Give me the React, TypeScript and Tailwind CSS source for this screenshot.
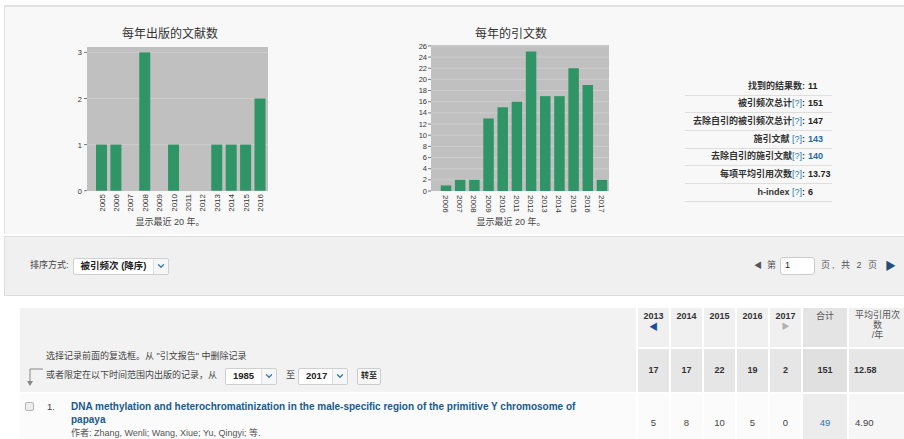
import { ChevronDown } from "lucide-react";

const FONT = "font-['Liberation_Sans','Noto_Sans_CJK_SC',sans-serif]";

const pubYears = [2005, 2006, 2007, 2008, 2009, 2010, 2011, 2012, 2013, 2014, 2015, 2016];
const pubCounts = [1, 1, 0, 3, 0, 1, 0, 0, 1, 1, 1, 2];

const citeYears = [2006, 2007, 2008, 2009, 2010, 2011, 2012, 2013, 2014, 2015, 2016, 2017];
const citeCounts = [1, 2, 2, 13, 15, 16, 25, 17, 17, 22, 19, 2];

const BAR = "#2f9566";
const PLOT = "#c0c0c0";
const GRID = "#cdcdcd";

function PubChart() {
  const zero = 149.7;
  const unit = 46.1;
  return (
    <svg width="200" height="175" className="block">
      <rect x="17" y="6" width="181" height="144" fill={PLOT} />
      {[1, 2, 3].map((v) => (
        <line key={v} x1="17" x2="198" y1={zero - v * unit} y2={zero - v * unit} stroke={GRID} strokeWidth="1" />
      ))}
      {[0, 1, 2, 3].map((v) => (
        <g key={v}>
          <line x1="14" x2="17" y1={zero - v * unit} y2={zero - v * unit} stroke="#777" />
          <text x="12" y={zero - v * unit + 3} textAnchor="end" fontSize="7.5" fill="#333">
            {v}
          </text>
        </g>
      ))}
      {pubYears.map((y, i) => {
        const cx = 31.5 + i * 14.41;
        const v = pubCounts[i];
        return (
          <g key={y}>
            {v > 0 && <rect x={cx - 5.5} y={zero - v * unit} width="11" height={v * unit} fill={BAR} />}
            <text
              transform={`translate(${cx + 3} 153) rotate(-90)`}
              textAnchor="end"
              fontSize="8"
              fill="#333"
            >
              {y}
            </text>
          </g>
        );
      })}
    </svg>
  );
}

function CiteChart() {
  const zero = 150;
  const unit = 5.58;
  const ticks = Array.from({ length: 14 }, (_, i) => i * 2);
  return (
    <svg width="202" height="175" className="block">
      <rect x="21" y="4" width="178" height="146" fill={PLOT} />
      {ticks.slice(1).map((v) => (
        <line key={v} x1="21" x2="199" y1={zero - v * unit} y2={zero - v * unit} stroke={GRID} strokeWidth="1" />
      ))}
      {ticks.map((v) => (
        <g key={v}>
          <line x1="18" x2="21" y1={zero - v * unit} y2={zero - v * unit} stroke="#777" />
          <text x="17" y={zero - v * unit + 2.6} textAnchor="end" fontSize="7.5" fill="#333">
            {v}
          </text>
        </g>
      ))}
      {citeYears.map((y, i) => {
        const cx = 36 + i * 14.18;
        const v = citeCounts[i];
        return (
          <g key={y}>
            <rect x={cx - 5.25} y={zero - v * unit} width="10.5" height={v * unit} fill={BAR} />
            <text transform={`translate(${cx - 3} 154) rotate(90)`} fontSize="8" fill="#333">
              {y}
            </text>
          </g>
        );
      })}
    </svg>
  );
}

const stats = [
  { label: "找到的结果数", q: false, value: "11" },
  { label: "被引频次总计", q: true, value: "151" },
  { label: "去除自引的被引频次总计", q: true, value: "147" },
  { label: "施引文献 ", q: true, value: "143", link: true },
  { label: "去除自引的施引文献", q: true, value: "140", link: true },
  { label: "每项平均引用次数", q: true, value: "13.73" },
  { label: "h-index ", q: true, value: "6" },
];

function Stats() {
  return (
    <div className="ml-[73px] mt-[71px] w-[147px]">
      {stats.map((s) => (
        <div key={s.label} className="flex h-[17.7px] items-center border-b border-[#dedede] text-[9px] font-bold">
          <div className="w-[123px] pr-[3px] text-right text-[#333]">
            {s.label}
            {s.q && <span className="font-normal text-[#2a76b0]">[?]</span>}
            <span>:</span>
          </div>
          <div className={s.link ? "text-[#1d6aa5]" : "text-[#222]"}>{s.value}</div>
        </div>
      ))}
    </div>
  );
}

function Select({ value, width }: { value: string; width: string }) {
  return (
    <div className={`flex h-[17px] items-stretch rounded-[2px] border border-[#cfcfcf] bg-white ${width}`}>
      <div className="flex flex-1 items-center pl-[7px] text-[9.5px] font-bold text-[#222]">{value}</div>
      <div className="flex w-[15px] items-center justify-center border-l border-[#dedede] bg-[#f4f6f8]">
        <ChevronDown size={10} strokeWidth={3} className="text-[#3576ad]" />
      </div>
    </div>
  );
}

const years = ["2013", "2014", "2015", "2016", "2017"];
const totals = ["17", "17", "22", "19", "2"];
const rowVals = ["5", "8", "10", "5", "0"];

export default function App() {
  return (
    <div className={`h-[439px] w-[904px] overflow-hidden bg-white ${FONT}`}>
      {/* charts */}
      <div className="ml-[4px] mt-[5px] flex h-[229px] border-l border-t-2 border-[#e2e2e2] bg-[#f8f8f8]">
        <div className="ml-[65px] w-[200px] pt-[20px]">
          <div className="text-center text-[12px] leading-[14px] text-[#333]">每年出版的文献数</div>
          <PubChart />
          <div className="text-center text-[9px] leading-[12px] text-[#444]">显示最近 20 年。</div>
        </div>
        <div className="ml-[140px] w-[202px] pt-[20px]">
          <div className="text-center text-[12px] leading-[14px] text-[#333]">每年的引文数</div>
          <CiteChart />
          <div className="text-center text-[9px] leading-[12px] text-[#444]">显示最近 20 年。</div>
        </div>
        <Stats />
      </div>

      {/* sort + paging */}
      <div className="ml-[4px] mt-[2px] flex h-[60px] items-center justify-between border-y border-l border-[#dddddd] bg-[#f0f0f0] pl-[25px] pr-[8px]">
        <div className="flex items-center gap-[4px] text-[9px] text-[#444]">
          <span>排序方式:</span>
          <Select value="被引频次 (降序)" width="w-[96px]" />
        </div>
        <div className="flex items-center text-[9px] text-[#555]">
          <span className="text-[8px] text-[#555]">◀</span>
          <span className="ml-[5px]">第</span>
          <div className="ml-[4px] flex h-[18px] w-[35px] items-center rounded-[3px] border border-[#cccccc] bg-white pl-[4px] text-[#222]">
            1
          </div>
          <span className="ml-[6px] tracking-[2px]">页, 共 2 页</span>
          <span className="ml-[6px] text-[11px] text-[#1f4f7d]">▶</span>
        </div>
      </div>

      {/* citation table */}
      <div className="pl-[20px] pt-[12px]">
        <div className="grid grid-cols-[616px_31px_31px_31px_31px_31px_44px_57px] grid-rows-[39px_43px_auto] gap-[2px] text-[9px]">
          <div className="row-span-2 flex flex-col justify-end bg-[#f2f2f2] pb-[5px] pl-[4px] text-[#444]">
            <div className="pl-[22px] leading-[17px]">选择记录前面的复选框。从 "引文报告" 中删除记录</div>
            <div className="flex items-center">
              <svg width="22" height="20" viewBox="0 0 22 20" className="mt-[2px]">
                <path d="M6 2 H19 M6 2 V15" stroke="#888" strokeWidth="1" fill="none" />
                <path d="M3 14 L9 14 L6 19 Z" fill="#888" />
              </svg>
              <span>或者限定在以下时间范围内出版的记录，从</span>
              <div className="ml-[8px]">
                <Select value="1985" width="w-[52px]" />
              </div>
              <span className="ml-[9px]">至</span>
              <div className="ml-[3px]">
                <Select value="2017" width="w-[50px]" />
              </div>
              <div className="ml-[9px] flex h-[17px] w-[24px] items-center justify-center rounded-[2px] border border-[#cccccc] bg-[#f7f7f7] text-[8px] font-bold text-[#333]">
                转至
              </div>
            </div>
          </div>
          {years.map((y, i) => (
            <div key={y} className="flex flex-col items-center bg-[#f0f0f0] pt-[2px] font-bold text-[#333]">
              <span className="leading-[12px]">{y}</span>
              {i === 0 && <span className="text-[9px] leading-[10px] text-[#1a4fa0]">◀</span>}
              {i === 4 && <span className="text-[8px] leading-[10px] text-[#b0b0b0]">▶</span>}
            </div>
          ))}
          <div className="bg-[#e4e4e4] pt-[2px] text-center leading-[12px] text-[#555]">合计</div>
          <div className="bg-[#f0f0f0] pt-[2px] text-center leading-[10px] text-[#555]">
            平均引用次
            <br />
            数
            <br />
            /年
          </div>
          {totals.map((t, i) => (
            <div key={i} className="flex items-center justify-center bg-[#e6e6e6] font-bold text-[#333]">
              {t}
            </div>
          ))}
          <div className="flex items-center justify-center bg-[#e0e0e0] font-bold text-[#333]">151</div>
          <div className="flex items-center bg-[#e6e6e6] pl-[5px] font-bold text-[#333]">12.58</div>

          <div className="flex bg-[#fbfbfb] pt-[6px] pl-[5px]">
            <div className="w-[22px] pt-[2px]">
              <div className="h-[9px] w-[9px] rounded-[2px] border border-[#b5b5b5] bg-[#ededed]" />
            </div>
            <div className="w-[24px] text-[9.5px] leading-[13px] text-[#444]">1.</div>
            <div className="w-[520px]">
              <div className="text-[10px] font-bold leading-[13px] text-[#1a5a8a]">
                DNA methylation and heterochromatinization in the male-specific region of the primitive Y chromosome of
                papaya
              </div>
              <div className="mt-[1px] text-[9px] leading-[13px] text-[#555]">作者: Zhang, Wenli; Wang, Xiue; Yu, Qingyi; 等.</div>
            </div>
          </div>
          {rowVals.map((v, i) => (
            <div key={i} className="bg-[#fbfbfb] pt-[22px] text-center text-[9.5px] text-[#444]">
              {v}
            </div>
          ))}
          <div className="bg-[#ececec] pt-[22px] text-center text-[9.5px] text-[#2a76b0]">49</div>
          <div className="bg-[#f6f6f6] pt-[22px] pl-[6px] text-[9.5px] text-[#444]">4.90</div>
        </div>
      </div>
    </div>
  );
}
